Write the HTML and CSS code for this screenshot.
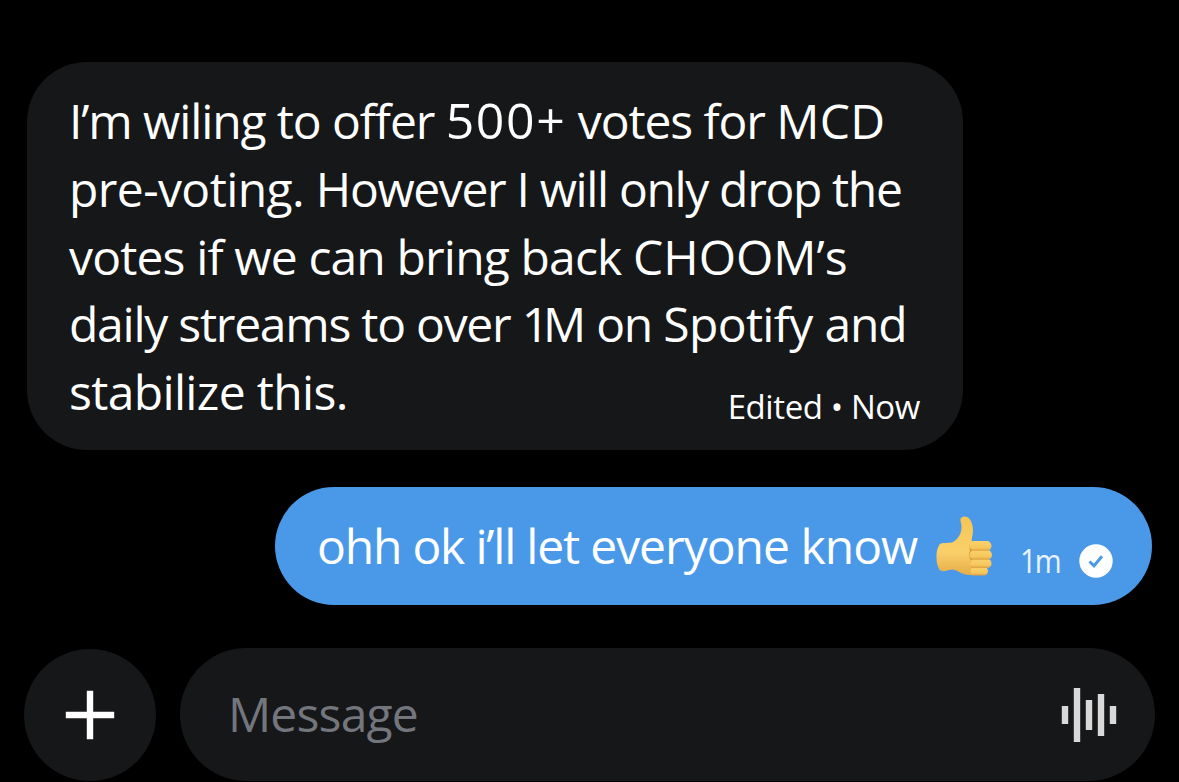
FILE: index.html
```html
<!DOCTYPE html>
<html lang="en">
<head>
<meta charset="utf-8">
<title>Messages</title>
<link rel="stylesheet" href="styles.css">
</head>
<body>
<main class="chat">
  <section class="bubble incoming">
    <p class="text">
      <span class="line l1">I’m wiling to offer <span class="num">500+</span> votes for <span class="caps">MCD</span></span>
      <span class="line l2"><span class="lead">pre-voting. </span>However I will only drop the</span>
      <span class="line l3">votes if we can bring back <span class="name">CHOOM’s</span></span>
      <span class="line l4">daily streams to over <span class="one">1</span>M on <span class="brand">Spotify </span>and</span>
      <span class="line l5">stabilize this.</span>
    </p>
    <span class="meta">Edited • Now</span>
  </section>
  <section class="bubble outgoing">
    <span class="reply">ohh ok i’ll let <span class="tail">everyone know</span></span>
    <svg class="thumb" viewBox="0 0 58 62" role="img" aria-label="Thumbs up">
      <defs>
        <linearGradient id="skin" x1="0" y1="0" x2="0" y2="1">
          <stop offset="0" stop-color="#f5c453"/><stop offset=".6" stop-color="#fad06a"/><stop offset="1" stop-color="#e6ac48"/>
        </linearGradient>
        <linearGradient id="finger" x1="0" y1="0" x2="0" y2="1">
          <stop offset="0" stop-color="#fbd26c"/><stop offset=".7" stop-color="#f6c65c"/><stop offset="1" stop-color="#dca040"/>
        </linearGradient>
      </defs>
      <path fill="url(#skin)" d="M4 28C7 26 14 28 18 25.500C23 21.500 25.500 17 25.500 11C25.500 7 23.500 4 25 2C27 -.5 32 0 34 3.500C37 8 37.500 14 36.500 19C36 22 35.500 24 36 26L48 30L49 57C43 60 31 60 25 57C20 54 17 52.500 13 54C9 55.500 5 56 3 53C-.5 47 -.5 33 4 28Z"/>
      <path fill="#d09134" d="M36 26C32 29 34 33 34 35C32 38 34 43 35 44C33 47 35 51 36 52C34 55 37 58 39 59L50 56V28Z"/>
      <rect fill="url(#finger)" x="34.500" y="51" width="17.500" height="8.500" rx="4.200"/>
      <rect fill="url(#finger)" x="34" y="43" width="21.500" height="9" rx="4.400"/>
      <rect fill="url(#finger)" x="33.500" y="34" width="22.500" height="9.800" rx="4.800"/>
      <rect fill="url(#finger)" x="33.500" y="25" width="22" height="9.800" rx="4.800"/>
    </svg>
    <span class="time">1m</span>
    <svg class="check" viewBox="0 0 34 34"><circle cx="17" cy="17" r="16.700" fill="#fff"/><path d="M10.500 17.500L15 21.800L23 12.200" fill="none" stroke="#4a99e9" stroke-width="2.900"/></svg>
  </section>
  <footer class="composer">
    <div class="add"><svg viewBox="0 0 50 50"><path d="M25 .8V49.200M.8 25H49.200" stroke="#fff" stroke-width="6.400"/></svg></div>
    <div class="field">
      <span class="placeholder">Message</span>
      <svg class="wave" viewBox="0 0 56 56"><path d="M4 19v18M16 1v54M28 13v30M40 7v42M52 19v18" stroke="#d9d9da" stroke-width="6.400"/></svg>
    </div>
  </footer>
</main>
</body>
</html>
```
FILE: styles.css
```css
body { margin: 0; background: #000; font-family: "Open Sans", sans-serif; color: #fff; }
.chat { box-sizing: border-box; width: 1179px; height: 782px; padding-top: 62px; overflow: hidden; display: flex; flex-direction: column; }
.bubble { display: flex; box-sizing: border-box; flex: none; white-space: nowrap; }
.incoming { width: 936px; height: 388px; margin-left: 27px; padding: 25px 43px 0 42px; border-radius: 60px; background: #161719; justify-content: space-between; }
.text { margin: 0; width: 640px; font-size: 48px; line-height: 67.75px; }
.line { display: block; height: 67.75px; }
.l1 { letter-spacing: -1.1px; }
.num { font-size: 50px; letter-spacing: 1.6px; }
.caps { letter-spacing: .3px; }
.l2 { letter-spacing: -1.35px; }
.lead { letter-spacing: -.6px; }
.l3 { letter-spacing: -.85px; }
.name { letter-spacing: 0; }
.l4 { letter-spacing: -1.25px; }
.one { letter-spacing: -6px; }
.brand { letter-spacing: -.65px; }
.l5 { letter-spacing: -.65px; }
.meta { margin: 297px 0 0 -40px; font-size: 33px; line-height: 46px; letter-spacing: -.4px; }
.outgoing { width: 877px; height: 118px; margin: 37px 27px 0 auto; padding-left: 42px; border-radius: 59px; background: #4a99e9; align-items: flex-start; }
.reply { width: 619px; margin-top: 25px; font-size: 48px; line-height: 68px; letter-spacing: -1.2px; }
.tail { letter-spacing: -1px; }
.thumb { flex: none; width: 58px; height: 62px; margin-top: 29px; }
.time { width: 59px; margin: 51px 0 0 26px; font-size: 33px; line-height: 46px; letter-spacing: -2px; color: #e9f3fd; transform: scaleX(.88); transform-origin: left; }
.check { flex: none; width: 34px; height: 34px; margin-top: 57px; }
.composer { display: flex; flex: none; margin: 43px 24px 0; gap: 24px; }
.add { display: flex; align-items: center; justify-content: center; flex: none; width: 132px; height: 132px; margin-top: 1px; border-radius: 50%; background: #161719; }
.add svg { width: 50px; height: 50px; }
.field { box-sizing: border-box; display: flex; justify-content: space-between; align-items: center; width: 975px; height: 133px; padding: 0 38px 0 48px; border-radius: 67px; background: #161719; }
.placeholder { padding-bottom: 1px; font-size: 48px; line-height: 68px; letter-spacing: -.8px; color: #73767c; }
.wave { width: 56px; height: 56px; }
```
